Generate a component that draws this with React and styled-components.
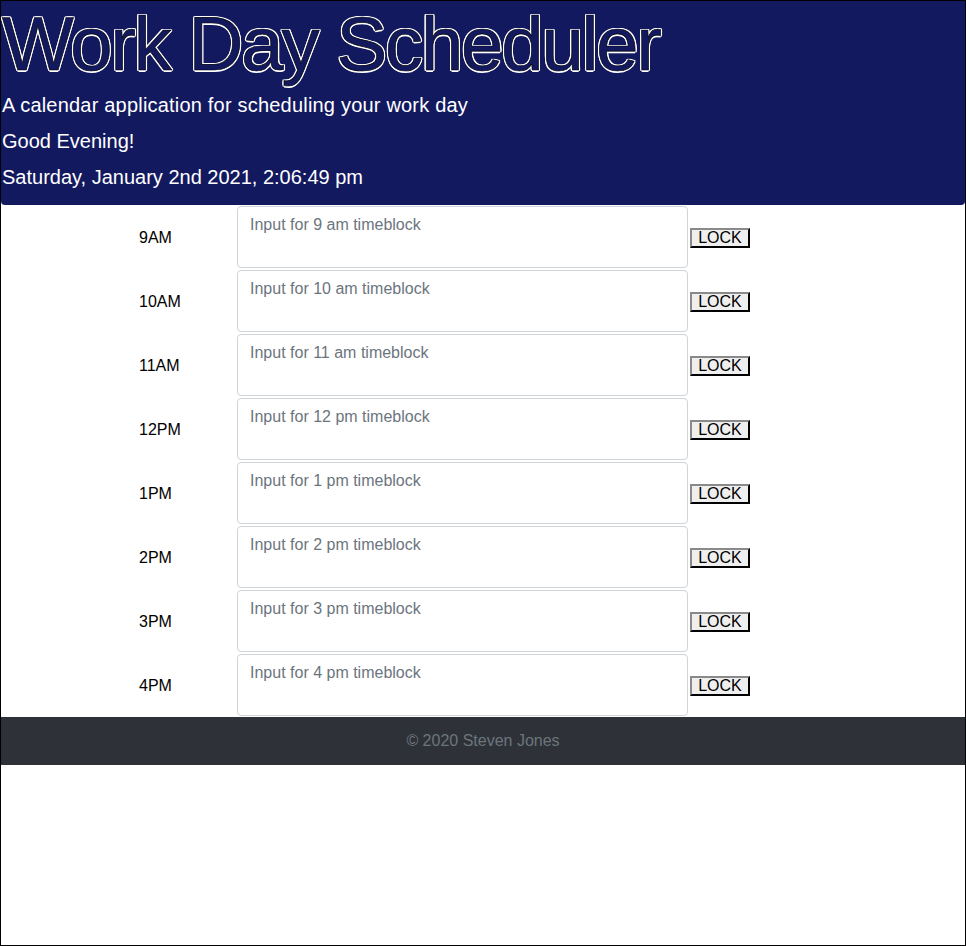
import React from "react";
import styled, { createGlobalStyle } from "styled-components";

const hours = [
  { label: "9AM", text: "9 am" },
  { label: "10AM", text: "10 am" },
  { label: "11AM", text: "11 am" },
  { label: "12PM", text: "12 pm" },
  { label: "1PM", text: "1 pm" },
  { label: "2PM", text: "2 pm" },
  { label: "3PM", text: "3 pm" },
  { label: "4PM", text: "4 pm" },
];

const GlobalStyle = createGlobalStyle`
  html, body {
    margin: 0;
    padding: 0;
    background: #ffffff;
  }
  body {
    font-family: "Liberation Sans", Arial, sans-serif;
    color: #212529;
  }
  * {
    box-sizing: border-box;
  }
`;

const Page = styled.div`
  min-height: 946px;
  border: 1px solid #000000;
  display: flex;
  flex-direction: column;
`;

const Header = styled.header`
  background-color: #13195f;
  color: #ffffff;
  padding: 0 0 10px 1px;
  border-radius: 0 0 4px 4px;
`;

const Title = styled.h1`
  margin: 0;
  font-size: 76px;
  font-weight: 300;
  letter-spacing: -2.1px;
  line-height: 86px;
  color: #13195f;
  -webkit-text-stroke: 0.7px #000000;
  text-shadow: -1.3px -1.3px 0 #fff, 1.3px -1.3px 0 #fff, -1.3px 1.3px 0 #fff,
    1.3px 1.3px 0 #fff, 0 1.5px 0 #fff, 0 -1.5px 0 #fff, 1.5px 0 0 #fff,
    -1.5px 0 0 #fff;
`;

const Lead = styled.p`
  margin: 0;
  font-size: 20px;
  line-height: 36px;
  letter-spacing: ${(p) => (p.$wide ? "0.2px" : "0")};
`;

const Schedule = styled.main`
  padding-left: 138px;
`;

const Row = styled.div`
  display: grid;
  grid-template-columns: 98px 451px auto;
  align-items: center;
  height: 64px;
`;

const Hour = styled.div`
  font-size: 16px;
  color: #000000;
  padding-top: 2px;
`;

const Block = styled.textarea`
  height: 62px;
  width: 451px;
  margin-top: 1px;
  resize: none;
  font-family: "Liberation Sans", Arial, sans-serif;
  font-size: 16px;
  line-height: 1.5;
  padding: 6px 12px;
  border: 1px solid #ced4da;
  border-radius: 4px;
  color: #495057;
  align-self: start;
  &::placeholder {
    color: #6c757d;
  }
`;

const LockButton = styled.button`
  justify-self: start;
  margin-left: 2px;
  margin-top: 2px;
  font-family: "Liberation Sans", Arial, sans-serif;
  font-size: 16px;
  line-height: 16px;
  padding: 0 5px;
  height: 20px;
  width: 60px;
  color: #000000;
  background: #efefef;
  border: 2px outset;
  border-color: #8a8a8a #1e1e1e #1e1e1e #8a8a8a;
  cursor: pointer;
`;

const Footer = styled.footer`
  background-color: #2e3238;
  color: #6c757d;
  text-align: center;
  font-size: 16px;
  height: 48px;
  line-height: 48px;
`;

export default function App() {
  return (
    <>
      <GlobalStyle />
      <Page>
        <Header>
          <Title>Work Day Scheduler</Title>
          <Lead $wide>A calendar application for scheduling your work day</Lead>
          <Lead>Good Evening!</Lead>
          <Lead>Saturday, January 2nd 2021, 2:06:49 pm</Lead>
        </Header>
        <Schedule>
          {hours.map((h) => (
            <Row key={h.label}>
              <Hour>{h.label}</Hour>
              <Block placeholder={`Input for ${h.text} timeblock`} />
              <LockButton>LOCK</LockButton>
            </Row>
          ))}
        </Schedule>
        <Footer>© 2020 Steven Jones</Footer>
      </Page>
    </>
  );
}
